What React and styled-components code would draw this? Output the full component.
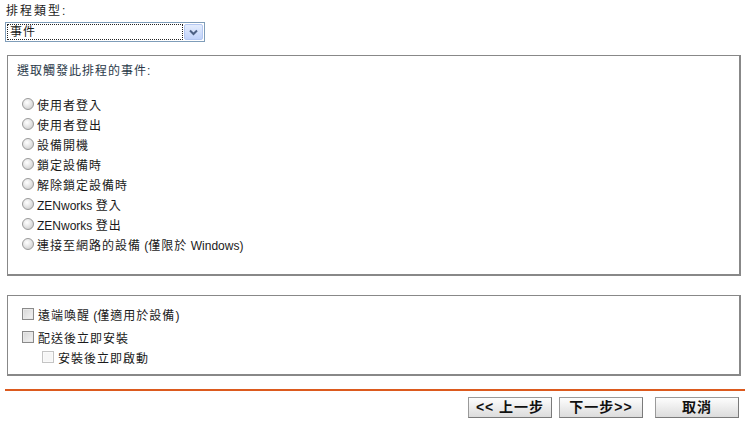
import React from 'react'
import styled, { createGlobalStyle } from 'styled-components'

const GlobalStyle = createGlobalStyle`
  body {
    margin: 0;
    background: #fff;
    font-family: "Liberation Sans", "Noto Sans CJK TC", sans-serif;
    font-size: 12px;
    letter-spacing: 1px;
    color: #1a1a1a;
  }
`

// latin runs are set tighter than the CJK around them
const Latin = styled.span`
  letter-spacing: 0;
`

const Page = styled.div`
  width: 740px;
  padding: 3px 0 0 5px;
`

const FieldLabel = styled.div`
  height: 16px;
  line-height: 16px;
  padding-left: 1px;
  letter-spacing: 2px;
`

const SelectBox = styled.div`
  margin-top: 3px;
  width: 198px;
  height: 18px;
  border: 1px solid #7f9db9;
  display: flex;
  background: #fff;
`

const SelectValue = styled.div`
  flex: 1;
  margin: 1px;
  border: 1px dotted #222;
  line-height: 14px;
  padding-left: 2px;
`

const SelectArrow = styled.div`
  width: 17px;
  margin: 1px 1px 1px 0;
  border: 1px solid #b5c8f2;
  border-radius: 2px;
  background: linear-gradient(#e4edfd, #c1d3fb);
  display: flex;
  align-items: center;
  justify-content: center;
`

const Panel = styled.div`
  margin: ${({ $top }) => $top}px 4px 0 2px;
  border: 1px solid #888;
  border-right-width: 2px;
  border-bottom-width: 2px;
  padding: ${({ $pad }) => $pad};
`

const PanelTitle = styled.div`
  line-height: 16px;
  color: #2b3a4a;
`

const OptionList = styled.div`
  margin-top: 15px;
  padding-left: 5px;
`

const Row = styled.label`
  display: flex;
  align-items: center;
  height: 20px;
  gap: ${({ $gap }) => $gap || 3}px;
  padding-left: ${({ $indent }) => $indent || 0}px;
  margin-bottom: ${({ $after }) => $after || 0}px;
`

const RowText = styled.span`
  white-space: pre;
`

const Radio = styled.span`
  width: 10px;
  height: 10px;
  border-radius: 50%;
  border: 1px solid #9a9a9a;
  background: radial-gradient(circle at 40% 35%, #fff 0, #e6e6e6 45%, #c4c4c4 100%);
  flex: none;
`

const Check = styled.span`
  width: 10px;
  height: 10px;
  border: 1px solid ${({ $disabled }) => ($disabled ? '#c4c4c4' : '#8a8a8a')};
  background: ${({ $disabled }) =>
    $disabled ? '#f6f6f6' : 'linear-gradient(135deg, #d6d6d6, #f4f4f4)'};
  box-shadow: inset 0 0 0 1px ${({ $disabled }) => ($disabled ? '#fafafa' : '#e8e8e8')};
  flex: none;
`

const Rule = styled.div`
  margin-top: 13px;
  height: 2px;
  background: #dc5a1e;
`

const Buttons = styled.div`
  display: flex;
  justify-content: flex-end;
  margin-top: 6px;
  padding-right: 6px;
`

const Button = styled.button`
  width: 84px;
  height: 21px;
  margin-left: ${({ $space }) => $space}px;
  padding: 0;
  border: 1px solid #9a9a9a;
  border-right-color: #7a7a7a;
  border-bottom-color: #7a7a7a;
  background: linear-gradient(#fdfdfd, #e9e9e9 60%, #dcdcdc);
  font-family: "Liberation Sans", "Noto Sans CJK TC", sans-serif;
  font-size: 14px;
  font-weight: bold;
  letter-spacing: 1px;
  line-height: 19px;
  color: #111;
`

const events = [
  <>使用者登入</>,
  <>使用者登出</>,
  <>設備開機</>,
  <>鎖定設備時</>,
  <>解除鎖定設備時</>,
  <><Latin>ZENworks </Latin>登入</>,
  <><Latin>ZENworks </Latin>登出</>,
  <>連接至網路的設備<Latin> (</Latin>僅限於<Latin> Windows)</Latin></>,
]

export default function App() {
  return (
    <Page>
      <GlobalStyle />
      <FieldLabel>排程類型:</FieldLabel>
      <SelectBox>
        <SelectValue>事件</SelectValue>
        <SelectArrow>
          <svg width="9" height="7" viewBox="0 0 9 7">
            <polyline points="1,1.5 4.5,5 8,1.5" fill="none" stroke="#4d6185" strokeWidth="2" />
          </svg>
        </SelectArrow>
      </SelectBox>

      <Panel $top={13} $pad="7px 9px 20px">
        <PanelTitle>選取觸發此排程的事件:</PanelTitle>
        <OptionList>
          {events.map((e, i) => (
            <Row key={i}>
              <Radio />
              <RowText>{e}</RowText>
            </Row>
          ))}
        </OptionList>
      </Panel>

      <Panel $top={19} $pad="8px 9px 7px 14px">
        <Row $gap={4} $after={3}>
          <Check />
          <RowText>遠端喚醒<Latin> (</Latin>僅適用於設備<Latin>)</Latin></RowText>
        </Row>
        <Row $gap={4}>
          <Check />
          <RowText>配送後立即安裝</RowText>
        </Row>
        <Row $gap={4} $indent={20}>
          <Check $disabled />
          <RowText>安裝後立即啟動</RowText>
        </Row>
      </Panel>

      <Rule />
      <Buttons>
        <Button $space={0}>&lt;&lt; 上一步</Button>
        <Button $space={7}>下一步&gt;&gt;</Button>
        <Button $space={12}>取消</Button>
      </Buttons>
    </Page>
  )
}
